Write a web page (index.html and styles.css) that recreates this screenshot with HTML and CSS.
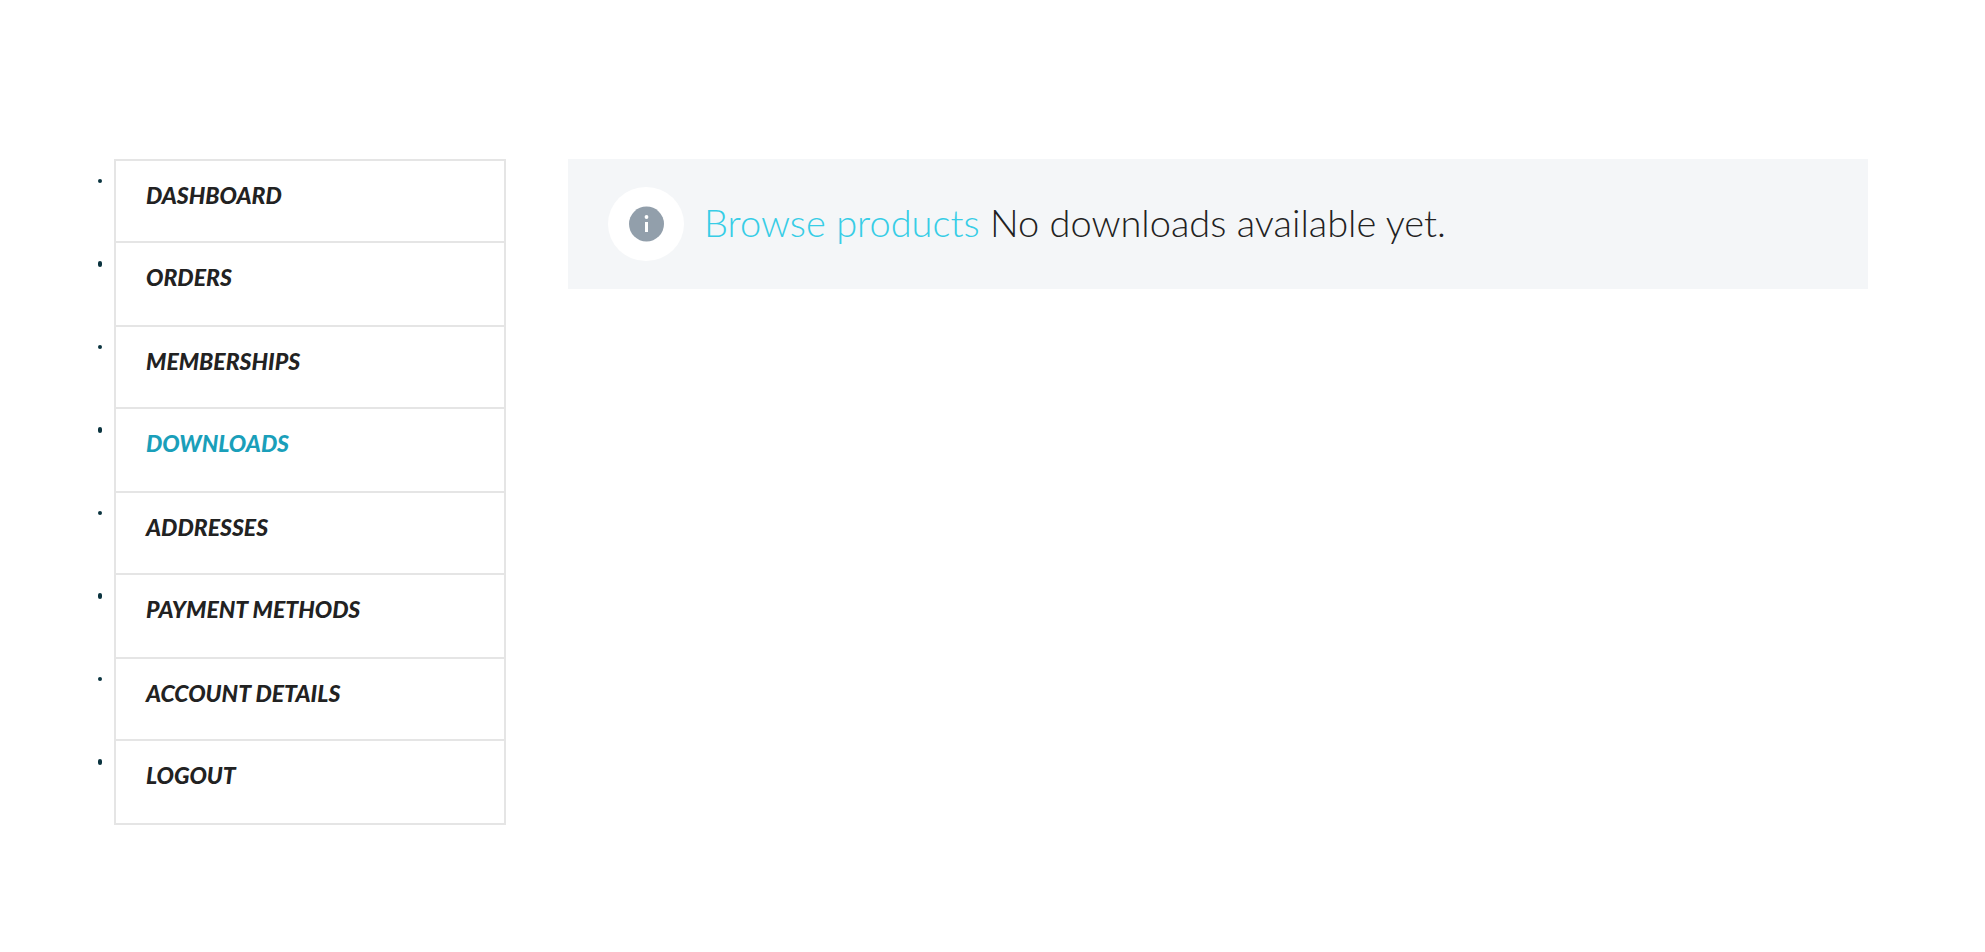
FILE: index.html
```html
<!doctype html>
<html lang="en">
    <head>
        <meta charset="UTF-8" />
        <meta name="viewport" content="width=device-width, initial-scale=1.0" />
        <title>Downloads - My Account</title>
        <link rel="stylesheet" href="styles.css">
    </head>
    <body>
        <div class="account">
            <nav class="account-nav" aria-label="Account pages">
                <ul>
                    <li><a href="#">Dashboard</a></li>
                    <li><a href="#">Orders</a></li>
                    <li><a href="#">Memberships</a></li>
                    <li><a href="#" class="active" aria-current="page">Downloads</a></li>
                    <li><a href="#">Addresses</a></li>
                    <li><a href="#">Payment methods</a></li>
                    <li><a href="#">Account details</a></li>
                    <li><a href="#">Logout</a></li>
                </ul>
            </nav>

            <main class="account-content">
                <div class="message">
                    <span class="message-icon">
                        <svg width="36" height="36" viewBox="0 0 36 36" aria-hidden="true">
                            <circle cx="18.5" cy="18" r="17.5" fill="#929fab" />
                            <circle cx="18.5" cy="11" r="1.9" fill="#fff" />
                            <rect x="17" y="16" width="3" height="10" fill="#fff" />
                        </svg>
                    </span>
                    <p><a href="#">Browse products</a> No downloads available yet.</p>
                </div>
            </main>
        </div>
    </body>
</html>
```

FILE: styles.css
```css
* {
    box-sizing: border-box;
}
body {
    margin: 0;
    background-color: #fff;
    color: #222;
    font-family: Lato, "Open Sans", sans-serif;
}
a {
    text-decoration: none;
}
.account {
    display: flex;
    align-items: flex-start;
    gap: 62px;
    padding: 159px 117px 40px 98px;
}

/* sidebar */
.account-nav {
    flex: 0 0 408px;
}
.account-nav ul {
    list-style: none;
    margin: 0;
    padding: 0;
}
.account-nav li {
    display: flex;
    align-items: flex-start;
    gap: 12px;
}
.account-nav li::before {
    content: "";
    width: 4px;
    height: 4px;
    margin-top: 20px;
    border-radius: 2px;
    background-color: #0b3440;
}
.account-nav li:nth-child(even)::before {
    height: 6px;
}
.account-nav a {
    flex: 1;
    padding: 21px 30px 33px;
    border: 2px solid #e5e5e5;
    border-bottom: none;
    color: #222;
    font-size: 23px;
    font-style: italic;
    font-weight: 900;
    line-height: 26px;
    text-transform: uppercase;
}
.account-nav li:nth-child(even) a {
    padding-bottom: 35px;
}
.account-nav li:last-child a {
    border-bottom: 2px solid #e5e5e5;
}
.account-nav a.active {
    color: #1a9fba;
}

/* notice */
.account-content {
    flex: 1;
    min-width: 0;
}
.message {
    display: flex;
    align-items: center;
    gap: 20px;
    padding: 28px 40px;
    background-color: #f4f6f8;
}
.message-icon {
    display: flex;
    flex: none;
    align-items: center;
    justify-content: center;
    width: 76px;
    height: 74px;
    border-radius: 50%;
    background-color: #fff;
}
.message p {
    margin: 0;
    padding-bottom: 4px;
    font-size: 38px;
    font-weight: 300;
    line-height: 48px;
}
.message a {
    color: #37cde6;
}
```
